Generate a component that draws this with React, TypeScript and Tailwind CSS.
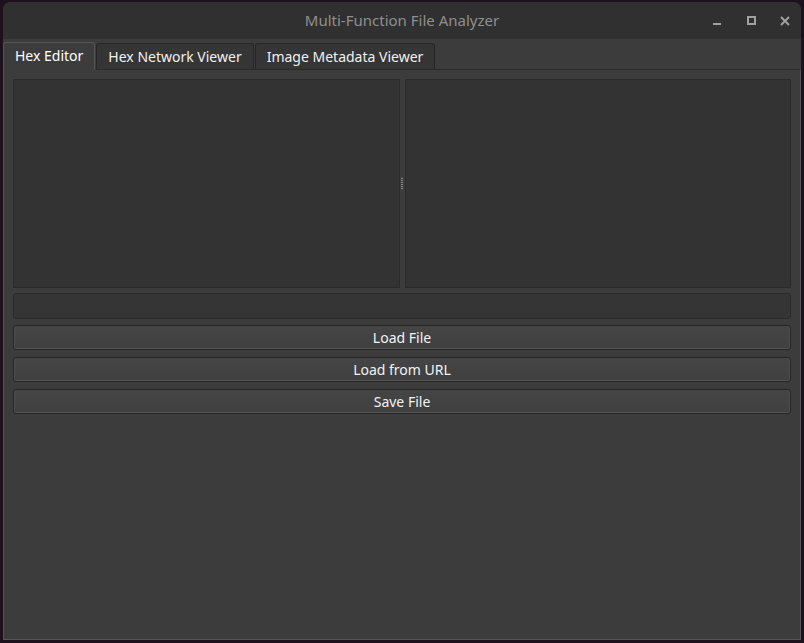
import React from "react";

const font = { fontFamily: '"Noto Sans", "Open Sans", sans-serif' };

const tabs = ["Hex Editor", "Hex Network Viewer", "Image Metadata Viewer"];
const actions = ["Load File", "Load from URL", "Save File"];

export default function App() {
  return (
    <div className="h-[643px] w-[804px] bg-[#1c111c] pt-[2px] pl-[3px] pr-[3px] pb-[3px]" style={font}>
      <div className="flex h-full flex-col overflow-hidden rounded-t-[8px] bg-[#3c3c3c]">
        {/* Title bar */}
        <div className="relative flex h-[37px] shrink-0 items-center justify-center bg-[#303030]">
          <span className="text-[15px] text-[#8f8f8f]">Multi-Function File Analyzer</span>
          <div className="absolute right-[10px] top-0 flex h-full items-center gap-[22px] text-[#a0a0a0]">
            <svg width="12" height="12" viewBox="0 0 12 12">
              <rect x="2" y="8" width="8" height="2" fill="#a0a0a0" />
            </svg>
            <svg width="12" height="12" viewBox="0 0 12 12">
              <rect x="3" y="2" width="7" height="7" fill="none" stroke="#a0a0a0" strokeWidth="2" />
            </svg>
            <svg width="12" height="12" viewBox="0 0 12 12">
              <path d="M2 2 L10 10 M10 2 L2 10" stroke="#a0a0a0" strokeWidth="2" />
            </svg>
          </div>
        </div>

        {/* Tabs */}
        <div className="flex h-[30px] shrink-0 items-end pt-[2px]">
          {tabs.map((t, i) =>
            i === 0 ? (
              <div
                key={t}
                className="relative z-10 -mb-px flex h-[28px] items-center rounded-t-[3px] border border-b-0 border-[#555] bg-[#3c3c3c] px-[11px] pb-[2px] text-[14px] text-white"
              >
                {t}
              </div>
            ) : (
              <div
                key={t}
                className="ml-[1px] flex h-[26px] items-center rounded-t-[3px] border border-b-0 border-[#262626] bg-[#353535] px-[11px] text-[14px] text-[#f0f0f0]"
              >
                {t}
              </div>
            )
          )}
        </div>

        {/* Tab pane */}
        <div className="flex flex-1 flex-col border border-[#555] border-t-[#2a2a2a] bg-[#3c3c3c] px-[9px] pt-[9px]">
          <div className="flex h-[209px] shrink-0">
            <div className="flex-1 border border-[#2a2a2a] bg-[#333333]" />
            <div className="flex w-[5px] flex-col items-center justify-center gap-[1px]">
              {[0, 1, 2, 3, 4, 5].map((d) => (
                <div key={d} className="h-[1px] w-[2px] bg-[#8a8a8a]" />
              ))}
            </div>
            <div className="flex-1 border border-[#2a2a2a] bg-[#333333]" />
          </div>

          <div className="mt-[5px] h-[26px] rounded-[3px] border border-[#2a2a2a] bg-[#353535]" />

          <div className="mt-[6px] flex flex-col gap-[7px]">
            {actions.map((a) => (
              <button
                key={a}
                className="flex h-[25px] items-center justify-center rounded-[3px] border border-[#262626] bg-gradient-to-b from-[#454545] to-[#3f3f3f] text-[14px] text-[#f2f2f2] shadow-[inset_0_-1px_0_#555,inset_1px_0_0_#4e4e4e,inset_-1px_0_0_#4e4e4e]"
              >
                {a}
              </button>
            ))}
          </div>
        </div>
      </div>
    </div>
  );
}
